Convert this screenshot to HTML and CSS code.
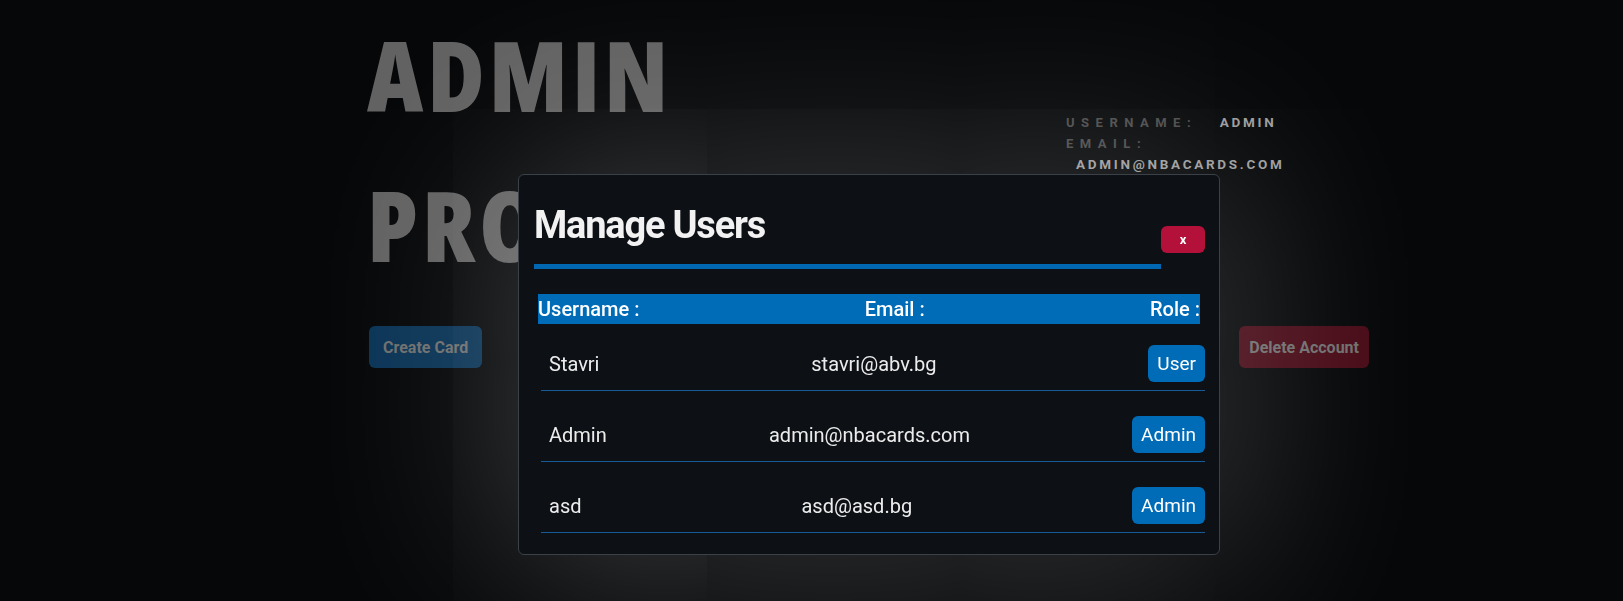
FILE: index.html
```html
<!DOCTYPE html>
<html lang="en">
<head>
<meta charset="utf-8">
<title>Admin Profile</title>
<link rel="stylesheet" href="styles.css">
</head>
<body>
<main class="profile">
  <div class="profile-top">
    <h1 class="profile-title">Admin Profile</h1>
    <div class="profile-info">
      <p class="info-line"><span class="info-label">Username:</span> <span class="info-value">admin</span></p>
      <p class="info-line"><span class="info-label">Email:</span> <span class="info-value email-value">admin@nbacards.com</span></p>
    </div>
  </div>
  <div class="profile-actions">
    <button class="page-btn page-btn-blue">Create Card</button>
    <button class="page-btn page-btn-red">Delete Account</button>
  </div>
</main>

<div class="modal">
  <div class="modal-head">
    <h2 class="modal-title">Manage Users</h2>
    <button class="close-btn">x</button>
  </div>
  <div class="table-head">
    <span>Username :</span>
    <span>Email :</span>
    <span>Role :</span>
  </div>
  <div class="user-list">
    <div class="user-row">
      <span>Stavri</span>
      <span>stavri@abv.bg</span>
      <button class="role-btn">User</button>
    </div>
    <div class="user-row">
      <span>Admin</span>
      <span>admin@nbacards.com</span>
      <button class="role-btn">Admin</button>
    </div>
    <div class="user-row">
      <span>asd</span>
      <span>asd@asd.bg</span>
      <button class="role-btn">Admin</button>
    </div>
  </div>
</div>
</body>
</html>
```

FILE: styles.css
```css
* { box-sizing: border-box; }

html, body {
  margin: 0;
  padding: 0;
  height: 100%;
}

body {
  background: #060709;
  font-family: Roboto, "Open Sans", sans-serif;
  color: #e8e8e8;
  overflow: hidden;
}

.profile {
  width: 1002px;
  margin-left: 367px;
}

.profile-top {
  display: grid;
  grid-template-columns: 699px 230px;
}

.profile-title {
  margin: -1px 0 0;
  width: 560px;
  font-family: "Open Sans", Roboto, sans-serif;
  font-stretch: 75%;
  font-weight: 800;
  font-size: 98px;
  line-height: 150px;
  letter-spacing: 4px;
  text-transform: uppercase;
  color: #626262;
}

.profile-info {
  padding-top: 112px;
}

.info-line {
  margin: 0;
  font-size: 13px;
  line-height: 20.5px;
  font-weight: 700;
  text-transform: uppercase;
  letter-spacing: 0.5em;
}

.info-label {
  color: #4a4a4a;
}

.info-value {
  margin-left: 13px;
  letter-spacing: 0.2em;
  font-size: 13.5px;
  color: #9c9c9c;
}

.email-value { margin-left: 10px; }

.profile-actions {
  display: flex;
  justify-content: space-between;
  margin-top: 27px;
  padding-left: 2px;
}

.page-btn {
  height: 42px;
  border: none;
  border-radius: 6px;
  padding: 0 14px;
  font-family: Roboto, sans-serif;
  font-weight: 700;
  font-size: 16px;
  color: #6f6f6f;
}

.page-btn-blue { background: #0a3456; }
.page-btn-red { background: #480b17; padding: 0 10px; }

.modal {
  position: fixed;
  top: 174px;
  left: 518px;
  width: 702px;
  background: #0d1116;
  border: 1px solid #3b4148;
  border-radius: 6px;
  padding: 28px 14px 21px 15px;
  box-shadow: 0 0 200px 20px rgba(255, 255, 255, 0.22);
}

.modal-head {
  display: flex;
  align-items: center;
}

.modal-title {
  flex: 1;
  margin: 0;
  font-size: 38px;
  line-height: 44px;
  font-weight: 700;
  letter-spacing: -1.2px;
  color: #f2f2f2;
  padding-bottom: 17px;
  border-bottom: 5px solid #0068b3;
}

.close-btn {
  width: 44px;
  height: 27px;
  margin-top: 7px;
  border: none;
  border-radius: 6px;
  background: #b3103a;
  color: #fff;
  font-family: Roboto, sans-serif;
  font-weight: 700;
  font-size: 13px;
}

.table-head {
  display: flex;
  justify-content: space-between;
  margin: 25px 5px 0 4px;
  height: 30px;
  line-height: 30px;
  background: #006bb6;
  color: #fff;
  font-size: 20px;
  font-weight: 500;
}

.user-list {
  margin-left: 7px;
}

.user-row {
  display: flex;
  justify-content: space-between;
  align-items: center;
  padding: 25px 0 8px 8px;
  border-bottom: 1px solid #135c99;
  font-size: 20px;
  color: #ececec;
}

.user-row:first-child {
  padding-top: 21px;
}

.role-btn {
  height: 37px;
  padding: 0 9px;
  border: none;
  border-radius: 6px;
  background: #006bb6;
  color: #fff;
  font-family: Roboto, sans-serif;
  font-size: 19px;
}
```
